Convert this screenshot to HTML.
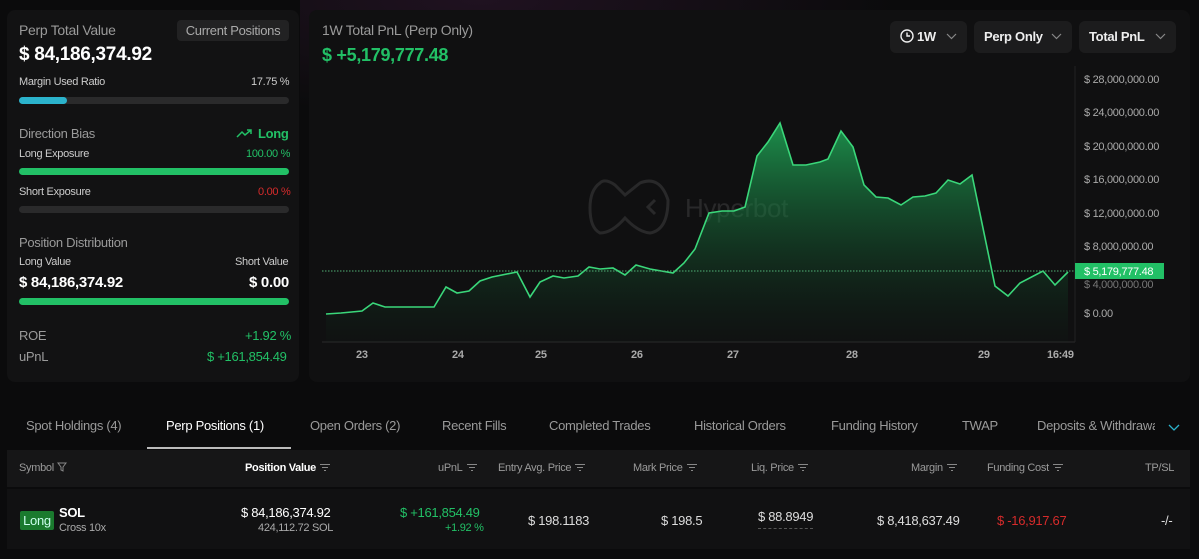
<!DOCTYPE html>
<html><head><meta charset="utf-8"><style>
*{margin:0;padding:0;box-sizing:border-box}
body{width:1199px;height:559px;overflow:hidden;background:#0b0b0c;font-family:"Liberation Sans",sans-serif;color:#ddd;position:relative;letter-spacing:-0.3px}
.a{position:absolute;white-space:nowrap}
.panel{position:absolute;background:#121213;border-radius:8px}
.g{color:#22c066}.r{color:#d62b2b}.m{color:#9a9a9a}
.bar{position:absolute;height:7px;border-radius:4px;background:#2a2a2b;left:19px;width:270px}
.btn{position:absolute;top:21px;height:32px;background:#1c1c1d;border-radius:6px;color:#eee;font-weight:bold;font-size:13px;line-height:32px;padding-left:10px;white-space:nowrap}
.btn svg{position:absolute;right:10px;top:12px}
.yl{position:absolute;left:1084px;font-size:11px;color:#aaa;white-space:nowrap}
.xl{position:absolute;top:349px;font-size:11px;color:#aaa;font-weight:bold}
.tab{position:absolute;top:418px;font-size:13px;color:#9a9a9a;white-space:nowrap}
.th{position:absolute;top:462px;font-size:11px;color:#9a9a9a;white-space:nowrap}
.ic{display:inline-block;width:10px;height:8px;margin-left:4px;border-top:1px solid #888;vertical-align:middle;position:relative}
.ic:before{content:"";position:absolute;left:2px;right:2px;top:2px;border-top:1px solid #888}
.ic:after{content:"";position:absolute;left:4px;right:4px;top:5px;border-top:1px solid #888}
</style></head><body>
<div style="position:absolute;left:300px;top:0;width:600px;height:120px;background:radial-gradient(ellipse at 30% 0%,rgba(70,30,70,.35),transparent 70%)"></div>
<div class="panel" style="left:7px;top:10px;width:292px;height:372px"></div>
<div class="panel" style="left:309px;top:10px;width:881px;height:372px;background:#101011"></div>

<div class="a m" style="left:19px;top:22px;font-size:14px">Perp Total Value</div>
<div class="a" style="left:177px;top:20px;width:112px;height:21px;background:#222223;border-radius:4px;color:#aaa;font-size:13px;text-align:center;line-height:21px">Current Positions</div>
<div class="a" style="left:19px;top:44px;font-size:19px;font-weight:bold;color:#fff">$ 84,186,374.92</div>
<div class="a" style="left:19px;top:76px;font-size:11px;color:#ccc">Margin Used Ratio</div>
<div class="a" style="left:251px;top:76px;font-size:11px;color:#ccc">17.75 %</div>
<div class="bar" style="top:97px"></div><div class="bar" style="top:97px;width:48px;background:#2bb3cc"></div>
<div class="a m" style="left:19px;top:126px;font-size:13px">Direction Bias</div>
<div class="a g" style="left:236px;top:126px;font-size:13px;font-weight:bold"><svg width="18" height="10" viewBox="0 0 18 10" style="margin-right:4px"><path d="M1 9 L6 4 L9 7 L15 2 M11 2 H15 V6" fill="none" stroke="#22c066" stroke-width="1.5"/></svg>Long</div>
<div class="a" style="left:19px;top:148px;font-size:11px;color:#ccc">Long Exposure</div>
<div class="a g" style="left:246px;top:148px;font-size:11px">100.00 %</div>
<div class="bar" style="top:168px;background:#22c066"></div>
<div class="a" style="left:19px;top:186px;font-size:11px;color:#ccc">Short Exposure</div>
<div class="a r" style="left:258px;top:186px;font-size:11px">0.00 %</div>
<div class="bar" style="top:206px"></div>
<div class="a m" style="left:19px;top:235px;font-size:13px">Position Distribution</div>
<div class="a" style="left:19px;top:256px;font-size:11px;color:#ccc">Long Value</div>
<div class="a" style="left:235px;top:256px;font-size:11px;color:#ccc">Short Value</div>
<div class="a" style="left:19px;top:274px;font-size:15px;font-weight:bold;color:#fff">$ 84,186,374.92</div>
<div class="a" style="left:249px;top:274px;font-size:15px;font-weight:bold;color:#fff">$ 0.00</div>
<div class="bar" style="top:298px;background:#22c066"></div>
<div class="a m" style="left:19px;top:328px;font-size:13px">ROE</div>
<div class="a g" style="left:245px;top:328px;font-size:13px">+1.92 %</div>
<div class="a m" style="left:19px;top:349px;font-size:13px">uPnL</div>
<div class="a g" style="left:207px;top:349px;font-size:13px">$ +161,854.49</div>

<div class="a m" style="left:322px;top:22px;font-size:14px">1W Total PnL (Perp Only)</div>
<div class="a g" style="left:322px;top:45px;font-size:18px;font-weight:bold">$ +5,179,777.48</div>
<div class="btn" style="left:890px;width:77px"><svg width="14" height="14" viewBox="0 0 14 14" style="position:static;vertical-align:-2px;margin-right:3px"><circle cx="7" cy="7" r="6" fill="none" stroke="#eee" stroke-width="1.4"/><path d="M7 3.5V7H10" fill="none" stroke="#eee" stroke-width="1.4"/></svg>1W<svg width="11" height="7" viewBox="0 0 11 7"><path d="M1 1L5.5 5.5 10 1" fill="none" stroke="#888" stroke-width="1.2"/></svg></div>
<div class="btn" style="left:974px;width:98px">Perp Only<svg width="11" height="7" viewBox="0 0 11 7"><path d="M1 1L5.5 5.5 10 1" fill="none" stroke="#888" stroke-width="1.2"/></svg></div>
<div class="btn" style="left:1079px;width:97px">Total PnL<svg width="11" height="7" viewBox="0 0 11 7"><path d="M1 1L5.5 5.5 10 1" fill="none" stroke="#888" stroke-width="1.2"/></svg></div>

<svg class="a" style="left:0;top:0" width="1199" height="390">
<defs><linearGradient id="gf" x1="0" y1="0" x2="0" y2="1"><stop offset="0" stop-color="#1fa656" stop-opacity=".85"/><stop offset="1" stop-color="#0f3a20" stop-opacity="0.05"/></linearGradient></defs>
<line x1="322" y1="342" x2="1075" y2="342" stroke="#2a2a2a"/>
<line x1="1075" y1="66" x2="1075" y2="342" stroke="#222"/>
<g opacity=".1" stroke="#fff" fill="none" stroke-width="3"><path d="M600 183 Q605 178 615 185 L625 195 L640 183 Q660 175 668 200 Q668 230 650 233 Q638 232 625 218 Q612 233 600 233 Q590 228 590 208 Q590 190 600 183Z"/><path d="M655 200 L648 207 655 214"/><text x="685" y="217" font-size="26" fill="#fff" stroke="none" font-family="Liberation Sans">Hyperbot</text></g>
<path d="M326 314 L341 313 362 311 373 303 385 307 434 307 446 287 457 293 469 291 480 281 492 277 517 272 530 297 540 282 553 276 564 278 578 276 589 267 600 269 613 268 625 275 636 265 650 269 673 273 684 263 695 249 709 213 722 211 734 211 745 207 757 156 768 142 780 123 793 165 806 165 820 162 828 159 841 131 853 147 864 185 876 197 888 198 901 205 913 197 925 196 936 193 948 180 960 184 972 175 995 286 1008 296 1020 283 1043 271 1055 285 1068 272 L1068 342 L326 342Z" fill="url(#gf)"/>
<path d="M326 314 L341 313 362 311 373 303 385 307 434 307 446 287 457 293 469 291 480 281 492 277 517 272 530 297 540 282 553 276 564 278 578 276 589 267 600 269 613 268 625 275 636 265 650 269 673 273 684 263 695 249 709 213 722 211 734 211 745 207 757 156 768 142 780 123 793 165 806 165 820 162 828 159 841 131 853 147 864 185 876 197 888 198 901 205 913 197 925 196 936 193 948 180 960 184 972 175 995 286 1008 296 1020 283 1043 271 1055 285 1068 272" fill="none" stroke="#3ad77a" stroke-width="1.6"/>
<line x1="322" y1="271" x2="1075" y2="271" stroke="#4fae74" stroke-dasharray="1.5 1.5"/>
<rect x="1075" y="263" width="89" height="16" fill="#22c066"/>
<text x="1084" y="275" font-size="11" fill="#fff" font-family="Liberation Sans" letter-spacing="-0.3">$ 5,179,777.48</text>
</svg>
<div class="yl" style="top:74px">$ 28,000,000.00</div>
<div class="yl" style="top:107px">$ 24,000,000.00</div>
<div class="yl" style="top:141px">$ 20,000,000.00</div>
<div class="yl" style="top:174px">$ 16,000,000.00</div>
<div class="yl" style="top:208px">$ 12,000,000.00</div>
<div class="yl" style="top:241px">$ 8,000,000.00</div>
<div class="yl" style="top:279px;color:#777">$ 4,000,000.00</div>
<div class="yl" style="top:308px">$ 0.00</div>
<div class="xl" style="left:356px">23</div><div class="xl" style="left:452px">24</div><div class="xl" style="left:535px">25</div><div class="xl" style="left:631px">26</div><div class="xl" style="left:727px">27</div><div class="xl" style="left:846px">28</div><div class="xl" style="left:978px">29</div><div class="xl" style="left:1047px">16:49</div>

<div class="tab" style="left:26px">Spot Holdings (4)</div>
<div class="tab" style="left:166px;color:#fff">Perp Positions (1)</div>
<div class="a" style="left:147px;top:447px;width:144px;height:2px;background:#bbb"></div>
<div class="tab" style="left:310px">Open Orders (2)</div>
<div class="tab" style="left:442px">Recent Fills</div>
<div class="tab" style="left:549px">Completed Trades</div>
<div class="tab" style="left:694px">Historical Orders</div>
<div class="tab" style="left:831px">Funding History</div>
<div class="tab" style="left:962px">TWAP</div>
<div class="tab" style="left:1037px;width:118px;overflow:hidden">Deposits &amp; Withdrawals</div>
<svg class="a" style="left:1168px;top:424px" width="12" height="8" viewBox="0 0 12 8"><path d="M1 1L6 6 11 1" fill="none" stroke="#2bb3cc" stroke-width="1.3"/></svg>

<div class="a" style="left:7px;top:450px;width:1183px;height:37px;background:#161617"></div>
<div class="a" style="left:7px;top:489px;width:1183px;height:60px;background:#111112"></div>
<div class="th" style="left:19px">Symbol <svg width="10" height="10" viewBox="0 0 10 10" style="vertical-align:-1px"><path d="M1 1H9L6 5V9L4 8V5Z" fill="none" stroke="#888"/></svg></div>
<div class="th" style="left:245px;color:#fff;font-weight:bold">Position Value<span class="ic"></span></div>
<div class="th" style="left:438px">uPnL<span class="ic"></span></div>
<div class="th" style="left:498px">Entry Avg. Price<span class="ic"></span></div>
<div class="th" style="left:633px">Mark Price<span class="ic"></span></div>
<div class="th" style="left:751px">Liq. Price<span class="ic"></span></div>
<div class="th" style="left:911px">Margin<span class="ic"></span></div>
<div class="th" style="left:987px">Funding Cost<span class="ic"></span></div>
<div class="th" style="left:1145px">TP/SL</div>

<div class="a" style="left:20px;top:511px;width:34px;height:19px;background:#1a7a2e;border-radius:2px;color:#cfe;font-size:13px;text-align:center;line-height:19px">Long</div>
<div class="a" style="left:59px;top:505px;font-size:13px;font-weight:bold;color:#fff">SOL</div>
<div class="a" style="left:59px;top:522px;font-size:11px;color:#aaa">Cross 10x</div>
<div class="a" style="left:241px;top:505px;font-size:13px;color:#fff">$ 84,186,374.92</div>
<div class="a" style="left:258px;top:522px;font-size:11px;color:#aaa">424,112.72 SOL</div>
<div class="a g" style="left:400px;top:505px;font-size:13px">$ +161,854.49</div>
<div class="a g" style="left:445px;top:522px;font-size:11px">+1.92 %</div>
<div class="a" style="left:528px;top:513px;font-size:13px;color:#ddd">$ 198.1183</div>
<div class="a" style="left:661px;top:513px;font-size:13px;color:#ddd">$ 198.5</div>
<div class="a" style="left:758px;top:509px;font-size:13px;color:#ddd;border-bottom:1px dashed #555;padding-bottom:4px">$ 88.8949</div>
<div class="a" style="left:877px;top:513px;font-size:13px;color:#ddd">$ 8,418,637.49</div>
<div class="a r" style="left:997px;top:513px;font-size:13px">$ -16,917.67</div>
<div class="a" style="left:1161px;top:513px;font-size:13px;color:#ddd">-/-</div>
</body></html>
